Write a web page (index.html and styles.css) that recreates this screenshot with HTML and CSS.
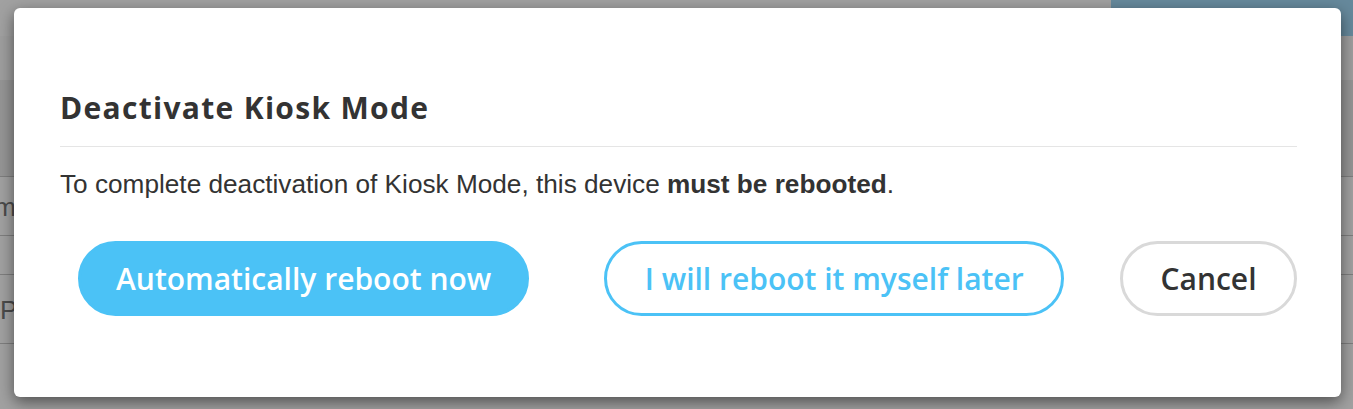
FILE: index.html
```html
<!DOCTYPE html>
<html lang="en">
<head>
<meta charset="utf-8">
<title>Deactivate Kiosk Mode</title>
<link rel="stylesheet" href="styles.css">
</head>
<body>
<div class="page">
  <div class="topbar">
    <div class="topbar-fill"></div>
    <div class="topbar-accent"></div>
  </div>
  <div class="strip"></div>
  <div class="panel"></div>
  <div class="list">
    <div class="row"><span class="cell cell-name">Name</span></div>
    <div class="row row-short"></div>
    <div class="row row-tall"><span class="cell">Password</span></div>
  </div>
</div>
<div class="backdrop"></div>
<div class="modal" role="dialog" aria-labelledby="modal-title">
  <h2 class="modal-title" id="modal-title">Deactivate Kiosk Mode</h2>
  <hr class="divider">
  <p class="message">To complete deactivation of Kiosk Mode, this device <strong>must be rebooted</strong>.</p>
  <div class="actions">
    <button class="btn btn-primary" type="button">Automatically reboot now</button>
    <button class="btn btn-outline" type="button">I will reboot it myself later</button>
    <button class="btn btn-cancel" type="button">Cancel</button>
  </div>
</div>
</body>
</html>
```
FILE: styles.css
```css
html, body {
  margin: 0;
  padding: 0;
}

body {
  width: 1353px;
  height: 409px;
  overflow: hidden;
  background: #ffffff;
  font-family: "Liberation Sans", Arial, sans-serif;
  position: relative;
}

.page {
  width: 100%;
  height: 100%;
}

.topbar {
  display: flex;
  height: 36px;
}

.topbar-fill {
  flex: 1;
  background: #ffffff;
}

.topbar-accent {
  width: 242px;
  background: #a2d9f8;
}

.strip {
  height: 44px;
  background: #fbfbfb;
}

.panel {
  height: 96px;
  background: #ededed;
  border-bottom: 1px solid #c8c8c8;
}

.row {
  border-bottom: 1px solid #c8c8c8;
  height: 58px;
  display: flex;
  align-items: center;
  overflow: hidden;
}

.cell {
  font-size: 26px;
  color: #777777;
  white-space: nowrap;
  padding-top: 2px;
}

.cell-name {
  margin-left: -39px;
}

.row-short {
  height: 38px;
}

.row-tall {
  height: 68px;
}

.backdrop {
  position: absolute;
  inset: 0;
  background: rgba(0, 0, 0, 0.37);
}

.modal {
  position: absolute;
  left: 14px;
  top: 8px;
  width: 1327px;
  height: 389px;
  box-sizing: border-box;
  padding: 82px 44px 0 46px;
  background: #ffffff;
  border-radius: 6px;
  box-shadow: 0 5px 15px rgba(0, 0, 0, 0.5);
}

.modal-title {
  margin: 0;
  font-family: "Open Sans", "Lato", sans-serif;
  font-weight: 700;
  font-size: 30px;
  line-height: 36px;
  letter-spacing: 1.3px;
  color: #333333;
}

.divider {
  margin: 20px 0 0;
  border: 0;
  border-top: 1px solid #e5e5e5;
  height: 0;
}

.message {
  margin: 22px 0 0;
  font-size: 26.2px;
  line-height: 30px;
  color: #333333;
}

.message strong {
  font-weight: 700;
}

.actions {
  display: flex;
  align-items: center;
  margin-top: 42px;
}

.btn {
  box-sizing: border-box;
  height: 75px;
  padding: 0 38px;
  border: 3px solid transparent;
  border-radius: 38px;
  font-family: "Open Sans", sans-serif;
  font-weight: 600;
  font-size: 30px;
  line-height: 1;
  background: #ffffff;
  cursor: pointer;
}

.btn-primary {
  margin-left: 18px;
  padding: 0 35px;
  background: #4bc2f6;
  border-color: #4bc2f6;
  color: #ffffff;
}

.btn-outline {
  margin-left: 75px;
  padding: 0 37.5px;
  border-color: #4bc2f6;
  color: #4bc2f6;
}

.btn-cancel {
  margin-left: auto;
  padding: 0 37.5px;
  border-color: #d9d9d9;
  color: #333333;
}
```
